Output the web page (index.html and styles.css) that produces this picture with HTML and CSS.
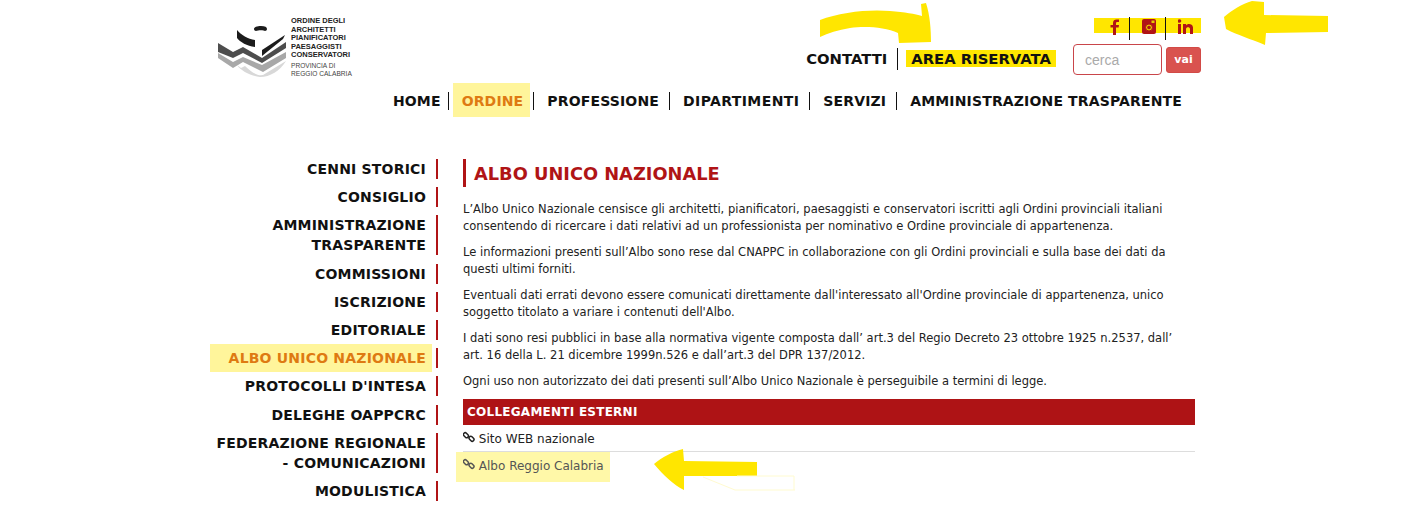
FILE: index.html
```html
<!DOCTYPE html>
<html lang="it">
<head>
    <meta charset="UTF-8">
    <meta name="viewport" content="width=device-width, initial-scale=1.0">
    <title>Albo Unico Nazionale</title>
    <link rel="stylesheet" href="styles.css">
</head>
<body>
    <div class="page">
        <header class="header">
            <div class="logo">
                <svg class="logo-mark" width="72" height="54" viewBox="0 0 72 54">
                    <path d="M36 5c0-2 3-3 7-3s6 1 6 3c0 1-1 2-2 2c-1-1-7-1-9 0c-1 0-2-1-2-2z" fill="#1c1c1c"/>
                    <path d="M19 6c4 5 11 9 18 10v7c-8-1-15-5-18-9z" fill="#1c1c1c"/>
                    <path d="M44 26L67 11l-2 4L44 32z" fill="#1c1c1c"/>
                    <path d="M0 19L15 28L25 23L44 34L68 18V24L44 39L25 29L15 34L0 28z" fill="#4d4d4d"/>
                    <path d="M0 29L15 38L25 33L44 41L68 28V34L45 48L25 38L15 44L0 34z" fill="#a8a8a8"/>
                    <path d="M19 41c4 6 14 11 23 12c10 0 20-6 26-16l-23 14c-6 1-12-3-18-9l-4 2z" fill="#d8d8d8"/>
                </svg>
                <div class="logo-text">
                    <div class="logo-name">ORDINE DEGLI<br>ARCHITETTI<br>PIANIFICATORI<br>PAESAGGISTI<br>CONSERVATORI</div>
                    <div class="logo-prov">PROVINCIA DI<br>REGGIO CALABRIA</div>
                </div>
            </div>
            <div class="header-right">
                <div class="social">
                    <a class="social-item" href="#">
                        <svg width="11" height="16" viewBox="0 0 11 16"><path d="M3 16V8.500H.5V6H3V4C3 1.500 4.500 .5 6.500 .5H9V3H7.500C6.500 3 6 3.500 6 4.300V6H9L8.600 8.500H6V16z" fill="#b01416"/></svg>
                    </a>
                    <a class="social-item" href="#">
                        <svg width="14" height="15" viewBox="0 0 14 15"><rect x="0" y="0" width="14" height="15" rx="2" fill="#b01416"/><circle cx="7" cy="8.500" r="3.500" fill="#e8c800" stroke="#b01416"/><circle cx="7" cy="8.500" r="1.800" fill="#b01416"/><rect x="9.500" y="1.500" width="3" height="2.500" fill="#e8c800"/></svg>
                    </a>
                    <a class="social-item" href="#">
                        <svg width="15" height="15" viewBox="0 0 15 15"><rect x="0" y="5" width="3" height="10" fill="#b01416"/><circle cx="1.500" cy="2" r="1.800" fill="#b01416"/><path d="M5 5h3v1.500c1-2 6.500-2.500 7 2V15h-3V10c0-2.500-4-2.500-4 0v5H5z" fill="#b01416"/></svg>
                    </a>
                </div>
                <div class="tools">
                    <ul class="top-links">
                        <li><a href="#">CONTATTI</a></li>
                        <li><a class="hl-link" href="#">AREA RISERVATA</a></li>
                    </ul>
                    <form class="search">
                        <input class="search-input" type="text" placeholder="cerca">
                        <button class="search-btn" type="button">vai</button>
                    </form>
                </div>
                <ul class="nav">
                    <li><a href="#">HOME</a></li>
                    <li class="active"><a href="#">ORDINE</a></li>
                    <li><a href="#">PROFESSIONE</a></li>
                    <li class="wide"><a href="#">DIPARTIMENTI</a></li>
                    <li><a href="#">SERVIZI</a></li>
                    <li><a href="#">AMMINISTRAZIONE TRASPARENTE</a></li>
                </ul>
            </div>
        </header>

        <div class="columns">
            <ul class="side">
                <li><a href="#">CENNI STORICI</a></li>
                <li><a href="#">CONSIGLIO</a></li>
                <li><a href="#">AMMINISTRAZIONE TRASPARENTE</a></li>
                <li><a href="#">COMMISSIONI</a></li>
                <li><a href="#">ISCRIZIONE</a></li>
                <li><a href="#">EDITORIALE</a></li>
                <li class="active"><a href="#">ALBO UNICO NAZIONALE</a></li>
                <li><a href="#">PROTOCOLLI D'INTESA</a></li>
                <li><a href="#">DELEGHE OAPPCRC</a></li>
                <li><a href="#">FEDERAZIONE REGIONALE<br>- COMUNICAZIONI</a></li>
                <li><a href="#">MODULISTICA</a></li>
            </ul>
            <main class="content">
                <h1>ALBO UNICO NAZIONALE</h1>
                <p>L’Albo Unico Nazionale censisce gli architetti, pianificatori, paesaggisti e conservatori iscritti agli Ordini provinciali italiani consentendo di ricercare i dati relativi ad un professionista per nominativo e Ordine provinciale di appartenenza.</p>
                <p>Le informazioni presenti sull’Albo sono rese dal CNAPPC in collaborazione con gli Ordini provinciali e sulla base dei dati da questi ultimi forniti.</p>
                <p>Eventuali dati errati devono essere comunicati direttamente dall'interessato all'Ordine provinciale di appartenenza, unico soggetto titolato a variare i contenuti dell'Albo.</p>
                <p>I dati sono resi pubblici in base alla normativa vigente composta dall’ art.3 del Regio Decreto 23 ottobre 1925 n.2537, dall’ art. 16 della L. 21 dicembre 1999n.526 e dall’art.3 del DPR 137/2012.</p>
                <p>Ogni uso non autorizzato dei dati presenti sull’Albo Unico Nazionale è perseguibile a termini di legge.</p>
                <div class="links-title">COLLEGAMENTI ESTERNI</div>
                <a class="link-row" href="#">
                    <svg width="12" height="12" viewBox="0 0 12 12"><g fill="none" stroke="currentColor" stroke-width="1.500"><rect x=".2" y="2.500" width="5.500" height="3.500" rx="1.700" transform="rotate(45 3 4.200)"/><rect x="5.800" y="6" width="5.500" height="3.500" rx="1.700" transform="rotate(45 8.500 7.700)"/></g></svg>
                    Sito WEB nazionale
                </a>
                <a class="link-row hl" href="#">
                    <svg width="12" height="12" viewBox="0 0 12 12"><g fill="none" stroke="currentColor" stroke-width="1.500"><rect x=".2" y="2.500" width="5.500" height="3.500" rx="1.700" transform="rotate(45 3 4.200)"/><rect x="5.800" y="6" width="5.500" height="3.500" rx="1.700" transform="rotate(45 8.500 7.700)"/></g></svg>
                    Albo Reggio Calabria
                </a>
            </main>
        </div>

        <!-- hand drawn marks on top of the screenshot -->
        <svg class="marks" width="1420" height="509" viewBox="0 0 1420 509">
            <path d="M820 37V20C840 12 870 9 890 11C905 12 915 14 922 16L921 4L926 3C930 15 931 30 931 42L899 43L898 33C885 27 865 26 850 28C838 30 828 33 820 37z" fill="#ffe600"/>
            <path d="M1224 17c8-7 18-13 28-16l12 1v13l64 1v16l-62 1l-1 12c-14-6-28-10-39-16z" fill="#ffe600"/>
            <path d="M654 464c8-7 20-13 29-15l1 12l73 1v14l-73 0l0 14c-10-5-21-15-30-26z" fill="#ffe600"/>
            <path d="M703 477l32 13h60M737 476h57v14" fill="none" stroke="#fffbd0" stroke-width="1"/>
        </svg>
    </div>
</body>
</html>
```

FILE: styles.css
```css
* {
    box-sizing: border-box;
}
body {
    margin: 0;
    background-color: #fff;
    color: #111;
    font-family: "DejaVu Sans", Verdana, sans-serif;
    overflow: hidden;
}
a {
    color: inherit;
    text-decoration: none;
}
ul {
    list-style: none;
    margin: 0;
    padding: 0;
}
.page {
    position: relative;
    z-index: 0;
    width: 1420px;
    height: 509px;
    overflow: hidden;
    padding: 0 219px 0 210px;
}

/* header */
.header {
    display: flex;
    justify-content: space-between;
    height: 159px;
}
.logo {
    display: flex;
    align-items: flex-start;
    margin: 17px 0 0 8px;
    gap: 1px;
}
.logo-mark {
    margin-top: 7px;
}
.logo-text {
    color: #222;
    font-family: "Liberation Sans", Arial, sans-serif;
}
.logo-name {
    font-size: 7.500px;
    line-height: 8.600px;
    font-weight: bold;
}
.logo-prov {
    margin-top: 2px;
    font-size: 6.600px;
    line-height: 8px;
    color: #444;
}
.header-right {
    display: flex;
    flex-direction: column;
    align-items: flex-end;
}
.social {
    display: flex;
    margin-top: 17px;
    height: 23px;
    background: linear-gradient(#ffe600, #ffe600) 0 1px / 100% 15px no-repeat;
}
.social-item {
    display: flex;
    justify-content: center;
    width: 36px;
    padding: 2px 0 0 3px;
    border-left: 1px solid #111;
}
.social-item:first-child {
    border-left: 0;
    width: 35px;
    padding-left: 7px;
}
.tools {
    display: flex;
    align-items: center;
    margin-top: 4px;
}
.top-links {
    display: flex;
    align-items: center;
    margin: -2px 22px 0 0;
}
.top-links li {
    padding: 0 10px 0 13px;
    border-left: 1px solid #111;
    line-height: 22px;
    font-size: 14.800px;
    font-weight: bold;
}
.top-links li:first-child {
    border-left: 0;
}
.top-links li:last-child {
    padding-right: 0;
}
.hl-link {
    display: inline-block;
    line-height: 17px;
    margin: 0 -5px;
    padding: 0 5px;
    background-color: #ffe600;
}
.search {
    display: flex;
    align-items: center;
}
.search-input {
    width: 89px;
    height: 31px;
    padding: 0 11px;
    border: 1px solid #c9454a;
    border-radius: 4px;
    font-family: "Liberation Sans", Arial, sans-serif;
    font-size: 14px;
    outline: none;
}
.search-input::placeholder {
    color: #aaa;
}
.search-btn {
    width: 35px;
    height: 26px;
    margin-left: 4px;
    background-color: #d9534f;
    color: #fff;
    border: 1px solid #d24a46;
    border-radius: 3px;
    font-family: "DejaVu Sans", sans-serif;
    font-size: 11px;
    font-weight: bold;
    padding: 0;
}
.nav {
    display: flex;
    align-items: center;
    margin-top: 8px;
    padding-top: 2px;
    height: 34px;
    margin-right: 19px;
}
.nav li {
    font-size: 14px;
    letter-spacing: .15px;
    font-weight: bold;
    line-height: 18px;
    padding: 0 10px 0 13px;
    border-left: 1px solid #111;
}
.nav li:first-child {
    border-left: 0;
    padding-right: 7px;
}
.nav li:last-child {
    padding-right: 0;
}
.nav li.wide {
    letter-spacing: .4px;
}
.nav li.active {
    position: relative;
    z-index: 0;
    color: #de7a12;
}
.nav li.active::before {
    content: "";
    position: absolute;
    z-index: -1;
    top: -9px;
    bottom: -7px;
    left: 4px;
    right: 3px;
    background-color: #fff59b;
}

/* columns */
.columns {
    display: flex;
}
.side {
    width: 228px;
    flex: none;
    text-align: right;
}
.side li {
    margin-bottom: 8.200px;
    padding-right: 10px;
    border-right: 2px solid #b01416;
    font-size: 14px;
    letter-spacing: .2px;
    font-weight: bold;
    line-height: 20px;
}
.side li.active {
    position: relative;
    z-index: 0;
    color: #de7a12;
}
.side li.active::before {
    content: "";
    position: absolute;
    z-index: -1;
    top: -4px;
    bottom: -4px;
    left: 0;
    width: 222px;
    background-color: #fff59b;
}
.content {
    width: 732px;
    margin-left: 25px;
    font-size: 11.500px;
    line-height: 17px;
    color: #222;
}
.content h1 {
    margin: 0 0 14px;
    padding: 1px 0 0 8px;
    border-left: 3px solid #b01416;
    color: #b01416;
    font-size: 17.800px;
    line-height: 27px;
    font-weight: bold;
}
.content p {
    margin: 0 0 9px;
}
.links-title {
    margin-top: 8px;
    padding-left: 4px;
    background-color: #ae1315;
    color: #fff;
    font-size: 12px;
    letter-spacing: .25px;
    font-weight: bold;
    line-height: 26px;
}
.link-row {
    display: block;
    padding: 6px 0 4px;
    height: 27px;
    font-size: 12px;
    border-bottom: 1px solid #ddd;
}
.link-row.hl {
    width: 154px;
    height: 30px;
    margin-left: -7px;
    padding-left: 7px;
    border-bottom: 0;
    color: #555;
    background-color: #fff8a8;
}
.marks {
    position: absolute;
    top: 0;
    left: 0;
    pointer-events: none;
}
```
